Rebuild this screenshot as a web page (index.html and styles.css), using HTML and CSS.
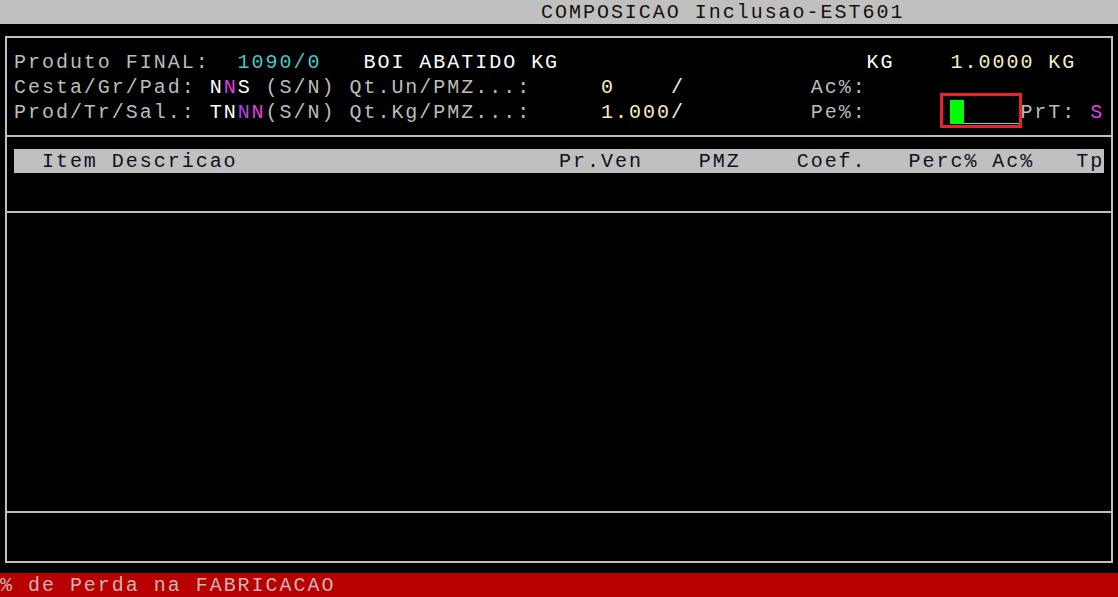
FILE: index.html
```html
<!DOCTYPE html>
<html lang="pt">
<head>
    <meta charset="UTF-8">
    <title>COMPOSICAO Inclusao-EST601</title>
    <link rel="stylesheet" href="styles.css">
</head>
<body>
    <div class="titlebar">COMPOSICAO Inclusao-EST601</div>
    <div class="screen">
        <div class="frame">
            <div class="info">
                <div class="row">Produto FINAL:  <span class="cyan">1090/0</span>   <span class="white">BOI ABATIDO KG</span>                      <span class="white">KG</span>    <span class="cream">1.0000 KG</span></div>
                <div class="row">Cesta/Gr/Pad: <span class="white">N</span><span class="magenta">N</span><span class="white">S</span> (S/N) Qt.Un/PMZ...:     <span class="cream">0    /</span>         Ac%:</div>
                <div class="row">Prod/Tr/Sal.: <span class="white">TN</span><span class="violet">N</span><span class="magenta">N</span>(S/N) Qt.Kg/PMZ...:     <span class="cream">1.000/</span>         Pe%:      <span class="cursor"> </span><span class="field">    </span>PrT: <span class="magenta">S</span></div>
            </div>
            <div class="cols">
                <div class="colhead">  Item Descricao                       Pr.Ven    PMZ    Coef.   Perc% Ac%   Tp</div>
            </div>
            <div class="list"></div>
            <div class="foot"></div>
        </div>
        <div class="marker"></div>
    </div>
    <div class="status">% de Perda na FABRICACAO</div>
</body>
</html>
```

FILE: styles.css
```css
body {
    margin: 0;
    width: 1118px;
    height: 597px;
    overflow: hidden;
    background-color: #000;
    color: #bcbcbc;
    font-family: "Liberation Mono", monospace;
    font-size: 20px;
    letter-spacing: 1.975px;
}
.titlebar {
    height: 24px;
    padding: 1px 0 0 541px;
    line-height: 23px;
    box-sizing: border-box;
    background: #c0c0c0;
    color: #161008;
    white-space: pre;
}
.screen {
    position: relative;
    height: 549px;
    padding-top: 12px;
    box-sizing: border-box;
}
.frame {
    margin-left: 5px;
    width: 1108px;
    border: 2px solid #c0c0c0;
    box-sizing: border-box;
}
.info {
    height: 97px;
    padding: 11.5px 0 0 6.975px;
    box-sizing: border-box;
}
.row {
    height: 25px;
    line-height: 25px;
    white-space: pre;
}
.white { color: #ffffff; }
.cyan { color: #48c8c8; }
.cream { color: #f6eec8; }
.magenta { color: #e040e0; }
.violet { color: #b048e8; }
.cursor {
    display: inline-block;
    height: 24px;
    vertical-align: top;
    background: #00ff00;
}
.field {
    display: inline-block;
    height: 24px;
    vertical-align: top;
    box-shadow: inset 0 -1px 0 #40e0e0;
}
.cols {
    height: 76px;
    border-top: 2px solid #c0c0c0;
    padding-top: 12px;
    box-sizing: border-box;
}
.colhead {
    margin-left: 6.975px;
    width: 1090px;
    height: 24px;
    padding-top: 1px;
    line-height: 23px;
    box-sizing: border-box;
    background: #c0c0c0;
    color: #0c1220;
    white-space: pre;
}
.list {
    height: 300px;
    border-top: 2px solid #c0c0c0;
    box-sizing: border-box;
}
.foot {
    height: 48px;
    border-top: 2px solid #c0c0c0;
}
.marker {
    position: absolute;
    left: 940px;
    top: 69px;
    width: 82px;
    height: 35px;
    border: 3px solid #e8232a;
    box-sizing: border-box;
}
.status {
    height: 24px;
    padding-top: 1px;
    line-height: 23px;
    box-sizing: border-box;
    background: #b80000;
    color: #ccb4b4;
    white-space: pre;
}
```
